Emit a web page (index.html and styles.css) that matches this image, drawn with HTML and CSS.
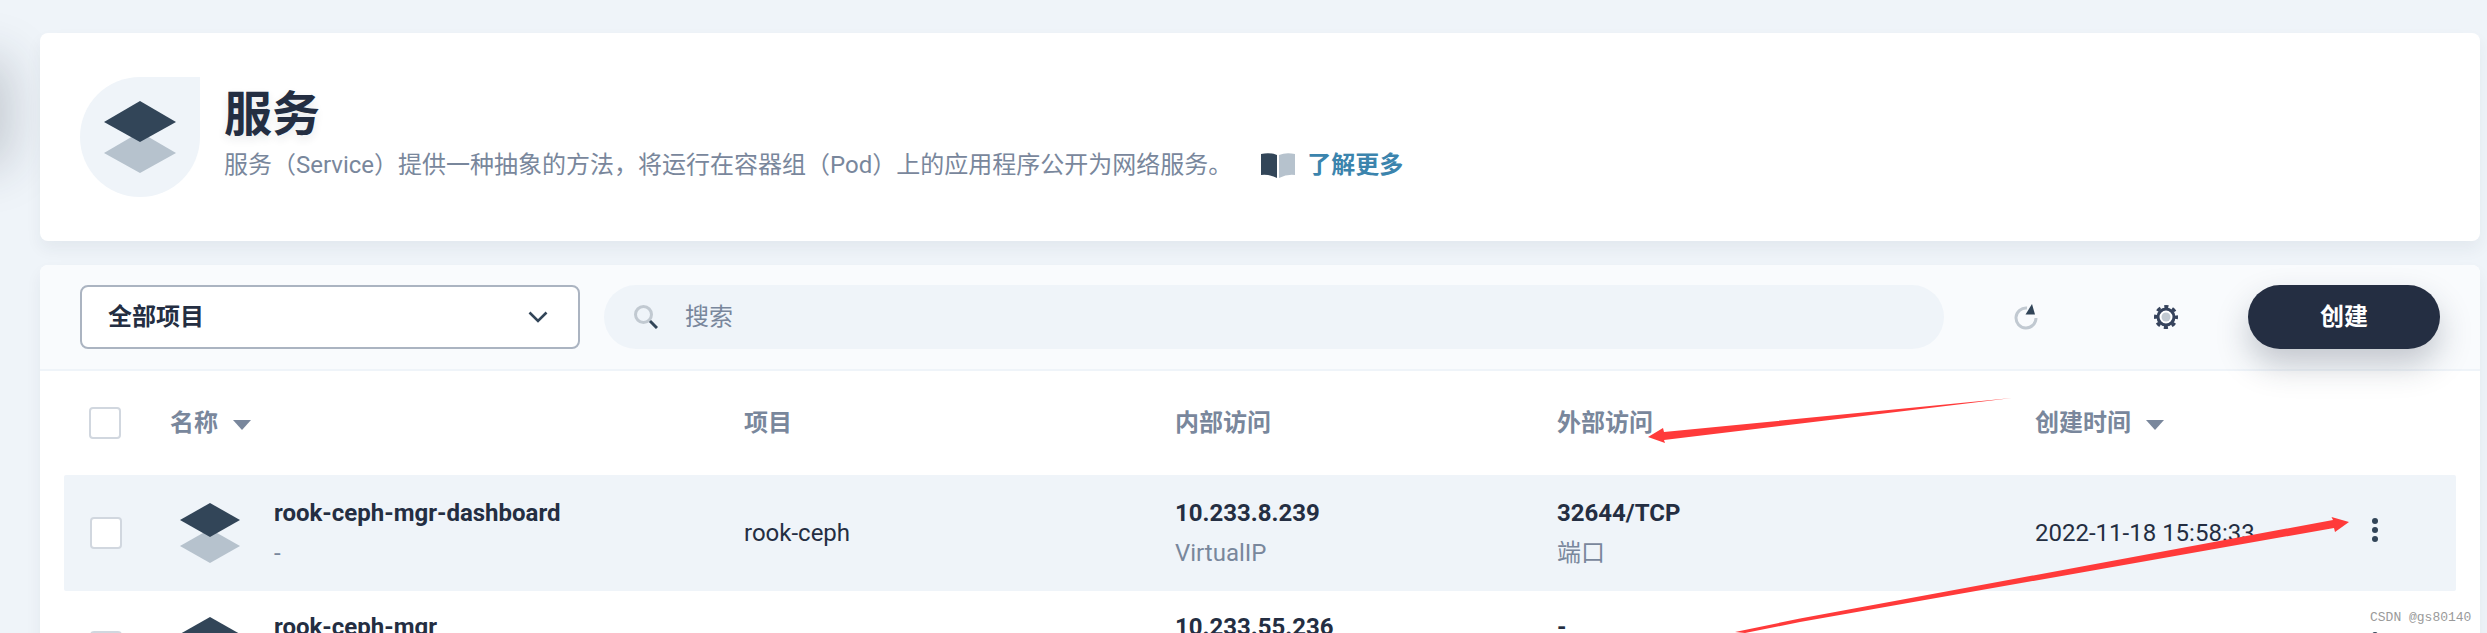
FILE: index.html
```html
<!DOCTYPE html>
<html lang="zh-CN">
<head>
    <meta charset="UTF-8">
    <title>服务</title>
    <link rel="stylesheet" href="styles.css">
</head>
<body>
    <div class="nav-shadow"></div>

    <main class="page">
        <section class="banner">
            <div class="banner-icon">
                <svg width="120" height="120" viewBox="0 0 120 120">
                    <polygon points="60,55 96,76 60,96 24,76" fill="#b6c2cd"/>
                    <polygon points="60,24 96,45 60,65 24,45" fill="#324558"/>
                </svg>
            </div>
            <div class="banner-text">
                <h1>服务</h1>
                <p class="banner-desc">
                    <span>服务（Service）提供一种抽象的方法，将运行在容器组（Pod）上的应用程序公开为网络服务。</span>
                    <svg class="book" width="34" height="25" viewBox="0 0 34 25">
                        <path d="M0 1 Q9 -1 16 2 V25 Q8 21 0 22 Z" fill="#324558"/>
                        <path d="M18 2 Q25 -1 34 1 V22 Q26 21 18 25 Z" fill="#b6c2cd"/>
                    </svg>
                    <a class="learn-more">了解更多</a>
                </p>
            </div>
        </section>

        <section class="panel">
            <div class="toolbar">
                <div class="select">
                    <span>全部项目</span>
                    <svg width="20" height="12" viewBox="0 0 20 12">
                        <path d="M1.5 1.5 L10 10 L18.5 1.5" fill="none" stroke="#324558" stroke-width="2.6"/>
                    </svg>
                </div>
                <div class="search">
                    <svg width="24" height="24" viewBox="0 0 24 24">
                        <circle cx="9.5" cy="9.5" r="8" fill="none" stroke="#c1c9d1" stroke-width="3"/>
                        <path d="M16 16 L23 23" stroke="#324558" stroke-width="3"/>
                    </svg>
                    <span>搜索</span>
                </div>
                <div class="icon-btn">
                    <svg width="24" height="26" viewBox="0 0 24 26">
                        <path d="M13 4 A10 10 0 1 0 22 14" fill="none" stroke="#c1c9d1" stroke-width="3"/>
                        <polygon points="18,0 21,10.5 11.5,10.5" fill="#324558"/>
                    </svg>
                </div>
                <div class="icon-btn">
                    <svg width="24" height="24" viewBox="0 0 24 24">
                        <circle cx="12" cy="12" r="10.5" fill="none" stroke="#36435c" stroke-width="3" stroke-dasharray="4.2 4.05" stroke-dashoffset="2.1"/>
                        <circle cx="12" cy="12" r="8" fill="#fff" stroke="#36435c" stroke-width="3"/>
                        <circle cx="12" cy="12" r="4.5" fill="#c1c9d1"/>
                    </svg>
                </div>
                <div class="btn-create">创建</div>
            </div>

            <div class="table-head">
                <span class="checkbox head-check"></span>
                <span class="th">名称<i class="sort"></i></span>
                <span class="th">项目</span>
                <span class="th">内部访问</span>
                <span class="th">外部访问</span>
                <span class="th">创建时间<i class="sort"></i></span>
            </div>

            <div class="row row-hover">
                <span class="checkbox"></span>
                <div class="name-cell">
                    <svg width="60" height="60" viewBox="0 0 60 60">
                        <polygon points="30,26 60,43 30,60 0,43" fill="#b6c2cd"/>
                        <polygon points="30,0 60,17 30,34 0,17" fill="#324558"/>
                    </svg>
                    <div class="stack">
                        <strong>rook-ceph-mgr-dashboard</strong>
                        <em class="muted">-</em>
                    </div>
                </div>
                <span>rook-ceph</span>
                <div class="stack">
                    <strong>10.233.8.239</strong>
                    <em class="muted">VirtualIP</em>
                </div>
                <div class="stack">
                    <strong>32644/TCP</strong>
                    <em class="muted">端口</em>
                </div>
                <span>2022-11-18 15:58:33</span>
                <div class="more"><i></i><i></i><i></i></div>
            </div>

            <div class="row">
                <span class="checkbox"></span>
                <div class="name-cell">
                    <svg width="60" height="60" viewBox="0 0 60 60">
                        <polygon points="30,26 60,43 30,60 0,43" fill="#b6c2cd"/>
                        <polygon points="30,0 60,17 30,34 0,17" fill="#324558"/>
                    </svg>
                    <div class="stack">
                        <strong>rook-ceph-mgr</strong>
                        <em class="muted">-</em>
                    </div>
                </div>
                <span>rook-ceph</span>
                <div class="stack">
                    <strong>10.233.55.236</strong>
                    <em class="muted">VirtualIP</em>
                </div>
                <div class="stack">
                    <strong>-</strong>
                    <em class="muted">-</em>
                </div>
                <span>2022-11-18 15:58:33</span>
                <div class="more"><i></i><i></i><i></i></div>
            </div>
        </section>
    </main>

    <!-- red arrows drawn on top of the screenshot -->
    <svg class="arrows" width="2487" height="633" viewBox="0 0 2487 633">
        <polygon points="2012,398 1664,432 1663,428 1648,437 1665,443 1664,440" fill="#ff3a3a"/>
        <polygon points="1735,632 1800,618.5 2333,520 2331.5,517 2349,522 2335,532 2334,528 1800,622 1745,633" fill="#ff3a3a"/>
    </svg>
    <div class="watermark">CSDN @gs80140</div>
</body>
</html>
```

FILE: styles.css
```css
* { box-sizing: border-box; }
html, body { height: 633px; }
body {
    margin: 0;
    overflow: hidden;
    position: relative;
    background: #eff4f9;
    color: #242e42;
    font-family: Roboto, "Noto Sans CJK SC", sans-serif;
    font-size: 24px;
}

.nav-shadow {
    position: absolute;
    left: -60px;
    top: 70px;
    width: 60px;
    height: 85px;
    box-shadow: 0 0 50px 10px rgba(36, 46, 66, 0.22);
}

.page { position: relative; padding: 33px 7px 0 40px; }

.banner {
    display: flex;
    height: 208px;
    padding: 44px 40px;
    margin-bottom: 24px;
    background: #fff;
    border-radius: 8px;
    box-shadow: 0 8px 16px rgba(36, 46, 66, 0.06);
}
.banner-icon {
    width: 120px;
    height: 120px;
    margin-right: 24px;
    background: #eff4f9;
    border-radius: 50% 0 50% 50%;
}
.banner-icon svg { display: block; }
.banner-text h1 {
    margin: 6px 0 0;
    font-size: 48px;
    line-height: 64px;
    font-weight: 700;
    text-shadow: 0 4px 8px rgba(36, 46, 66, 0.1);
}
.banner-desc {
    display: flex;
    align-items: center;
    margin: -2px 0 0;
    line-height: 40px;
    color: #79879c;
}
.book { margin-left: 29px; margin-right: 12px; }
.learn-more { color: #3b84ad; font-weight: 700; }

.panel {
    height: 400px;
    background: #fff;
    border-radius: 8px 8px 0 0;
    box-shadow: 0 8px 16px rgba(36, 46, 66, 0.06);
}

.toolbar {
    display: flex;
    align-items: center;
    height: 106px;
    padding: 20px 40px;
    background: #f9fbfd;
    border-bottom: 2px solid #eff4f9;
    border-radius: 8px 8px 0 0;
}
.select {
    display: flex;
    align-items: center;
    justify-content: space-between;
    width: 500px;
    height: 64px;
    padding: 0 30px 0 26px;
    margin-right: 24px;
    background: #fff;
    border: 2px solid #abb4c1;
    border-radius: 8px;
    font-weight: 700;
}
.select span { padding-bottom: 5px; }
.search {
    display: flex;
    align-items: center;
    flex: 1;
    height: 64px;
    padding-left: 30px;
    margin-right: 34px;
    background: #eff4f9;
    border-radius: 32px;
    color: #79879c;
}
.search span { margin-left: 27px; padding-bottom: 5px; }
.icon-btn {
    display: flex;
    align-items: center;
    justify-content: center;
    width: 96px;
    height: 64px;
    margin-right: 44px;
}
.icon-btn + .btn-create { margin-left: -10px; }
.btn-create {
    width: 192px;
    height: 64px;
    line-height: 64px;
    text-align: center;
    background: #242e42;
    color: #fff;
    font-weight: 700;
    border-radius: 32px;
    box-shadow: 0 16px 32px rgba(36, 46, 66, 0.25);
}

.table-head, .row {
    display: grid;
    grid-template-columns: 80px 574px 431px 382px 478px 337px 1fr;
    align-items: center;
    margin: 0 24px;
    padding-left: 26px;
}
.table-head { height: 104px; }
.th { color: #79879c; font-weight: 700; padding-bottom: 5px; }
.sort {
    display: inline-block;
    margin-left: 15px;
    vertical-align: middle;
    border-left: 9px solid transparent;
    border-right: 9px solid transparent;
    border-top: 10px solid #79879c;
}

.checkbox {
    width: 32px;
    height: 32px;
    background: #fff;
    border: 2px solid #d1d7df;
    border-radius: 4px;
}
.head-check { margin-left: -1px; }

.row { height: 112px; }
.row-hover { height: 116px; background: #eff4f9; border-radius: 2px; }
.name-cell { display: flex; align-items: center; gap: 34px; margin-left: 10px; }
.stack { display: flex; flex-direction: column; gap: 10px; }
.stack strong { font-weight: 700; line-height: 30px; }
.stack em { font-style: normal; line-height: 30px; }
.muted { color: #79879c; }

.more { display: flex; flex-direction: column; align-items: center; gap: 3px; width: 6px; padding-bottom: 6px; }
.more i { width: 6px; height: 6px; background: #324558; border-radius: 50%; }

.arrows { position: absolute; left: 0; top: 0; }
.watermark {
    position: absolute;
    left: 2370px;
    top: 610px;
    font-family: "Liberation Mono", monospace;
    font-size: 13px;
    line-height: 15px;
    color: #9a9a9a;
}
```
